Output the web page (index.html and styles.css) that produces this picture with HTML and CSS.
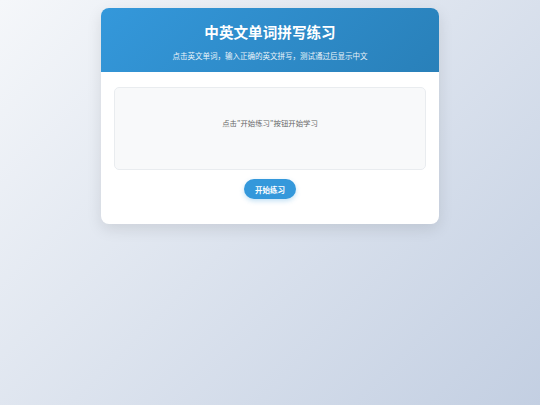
FILE: index.html
```html
<!DOCTYPE html>
<html lang="zh-CN">
<head>
<meta charset="utf-8">
<title>中英文单词拼写练习</title>
<link rel="stylesheet" href="styles.css">
</head>
<body>
<div class="card">
  <header class="header">
    <h1 class="title">中英文单词拼写练习</h1>
    <p class="subtitle">点击英文单词，输入正确的英文拼写，测试通过后显示中文</p>
  </header>
  <main class="content">
    <div class="board">
      <p class="hint">点击"开始练习"按钮开始学习</p>
    </div>
    <div class="actions">
      <button class="btn">开始练习</button>
    </div>
  </main>
</div>
</body>
</html>
```

FILE: styles.css
```css
html, body {
  margin: 0;
  padding: 0;
  height: 100%;
}
body {
  background: linear-gradient(135deg, #f5f7fa 0%, #c3cfe2 100%);
  font-family: "Noto Sans CJK SC", "Noto Sans", sans-serif;
  padding-top: 8px;
  box-sizing: border-box;
}
.card {
  width: 338px;
  margin: 0 auto;
  background: #fff;
  border-radius: 8px;
  overflow: hidden;
  box-shadow: 0 5px 15px rgba(0, 0, 0, 0.1);
}
.header {
  background: linear-gradient(135deg, #3498db 0%, #2980b9 100%);
  color: #fff;
  text-align: center;
  padding: 13.5px 10px 11.5px;
}
.title {
  margin: 0;
  font-size: 14.6px;
  line-height: 20px;
  font-weight: 700;
}
.subtitle {
  margin: 8px 0 0;
  font-size: 7.5px;
  line-height: 11px;
  opacity: 0.9;
}
.content {
  padding: 15px 13px 25px;
}
.board {
  height: 83px;
  box-sizing: border-box;
  background: #f8f9fa;
  border: 1px solid #e9ecef;
  border-radius: 5px;
  padding-top: 29px;
  text-align: center;
}
.hint {
  margin: 0;
  font-size: 7.4px;
  line-height: 11px;
  color: #666;
}
.actions {
  display: flex;
  justify-content: center;
  margin-top: 9px;
}
.btn {
  width: 52px;
  height: 20px;
  border: none;
  border-radius: 10px;
  background: #3498db;
  color: #fff;
  font-family: inherit;
  font-size: 7.5px;
  font-weight: 700;
  padding: 0;
  box-shadow: 0 2px 5px rgba(52, 152, 219, 0.3);
}
```
